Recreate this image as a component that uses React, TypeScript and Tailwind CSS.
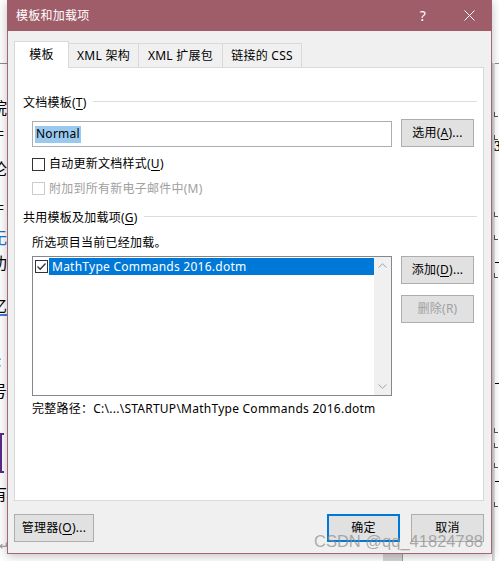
import React from 'react';

const ui = "font-['Noto_Sans','Noto_Sans_CJK_SC',sans-serif]";

// underlined access key letter
const K = ({ children }: { children: React.ReactNode }) => (
  <span className="underline underline-offset-[2px] decoration-1">{children}</span>
);

const WinButton = ({
  children,
  width = 'w-[73px]',
  disabled = false,
  primary = false,
}: {
  children: React.ReactNode;
  width?: string;
  disabled?: boolean;
  primary?: boolean;
}) => (
  <div
    className={`${width} h-[28px] shrink-0 flex items-center justify-center bg-[#e1e1e1] ${
      primary ? 'border-2 border-[#0078d7]' : 'border border-[#adadad]'
    } ${disabled ? 'text-[#a0a0a0]' : 'text-black'}`}
  >
    {children}
  </div>
);

const Check = ({ checked = false, disabled = false }: { checked?: boolean; disabled?: boolean }) => (
  <div
    className={`w-[13px] h-[13px] shrink-0 bg-white border flex items-center justify-center ${
      disabled ? 'border-[#cccccc]' : 'border-[#333333]'
    }`}
  >
    {checked && (
      <svg width="11" height="11" viewBox="0 0 11 11">
        <path d="M1.5 5.5 L4.2 8.2 L9.5 2.5" fill="none" stroke="#333" strokeWidth="1.3" />
      </svg>
    )}
  </div>
);

const GroupHeader = ({ children, mt }: { children: React.ReactNode; mt: string }) => (
  <div className={`${mt} h-[16px] flex items-center pl-[8px] pr-[6px]`}>
    <span className="whitespace-nowrap">{children}</span>
    <div className="flex-1 h-px bg-[#dcdcdc] ml-[6px] mb-[4px]" />
  </div>
);

const tabs = [
  { label: '模板', w: 'w-[55px]' },
  { label: 'XML 架构', w: 'w-[70px]' },
  { label: 'XML 扩展包', w: 'w-[84px]' },
  { label: '链接的 CSS', w: 'w-[79px]' },
];

const rightMarks = [112, 135, 212, 235, 273, 428, 443, 463, 502];

export default function App() {
  return (
    <div className={`relative w-[499px] h-[561px] overflow-hidden bg-white text-[12px] leading-[16px] tracking-[0.25px] text-black ${ui}`}>
      {/* Word document peeking out behind the dialog */}
      <div className="absolute left-0 top-[63px] w-[8px] h-px bg-[#8c8c8c]" />
      <div className="absolute left-[491px] top-[63px] w-[8px] h-px bg-[#8c8c8c]" />
      <div className="absolute left-[492px] top-[63px] w-[3px] h-[498px] bg-gradient-to-r from-[#c8c8c8] to-[#ececec]" />
      {rightMarks.map((y) => (
        <div key={y} className="absolute left-[494px] w-[4px] h-[5px] border-l border-b border-[#555]" style={{ top: y }} />
      ))}
      {[262, 383, 481].map((y) => (
        <div key={y} className="absolute left-[495px] w-[4px] h-px bg-black" style={{ top: y }} />
      ))}
      <div className="absolute left-[494px] top-[138px] text-[15px] leading-[16px] font-bold font-['Liberation_Serif',serif]">3.</div>
      <div className="absolute left-[-9px] text-[16px] leading-[16px] font-['Noto_Sans_CJK_SC',serif]">
        <span className="absolute top-[99px]">院</span>
        <span className="absolute top-[124px] left-[4px]">=</span>
        <span className="absolute top-[160px]">论</span>
        <span className="absolute top-[198px] left-[4px]">=</span>
        <span className="absolute top-[229px] text-[#1f6fd1]">无</span>
        <span className="absolute top-[254px]">功</span>
        <span className="absolute top-[297px]">亿</span>
        <span className="absolute top-[314px] left-[8px] w-[8px] h-[2px] bg-[#3b7ddd]" />
        <span className="absolute top-[352px] left-[6px]">:</span>
        <span className="absolute top-[382px]">号</span>
        <span className="absolute top-[433px] left-[9px] w-[4px] h-[40px] border-l-2 border-y-2 border-[#5a2a8a]" />
        <span className="absolute top-[485px]">有</span>
        <span className="absolute top-[537px] left-[8px] text-[#999] text-[12px]">↵</span>
      </div>
      <div className="absolute left-[383px] top-[553px] w-[20px] h-[8px] bg-[#d6d6d6] border-r border-[#a0a0a0]" />

      {/* dialog window */}
      <div className="absolute left-[7px] top-0 w-[485px] h-[554px] flex flex-col shadow-[0_2px_10px_rgba(0,0,0,0.25)]">
        <div className="h-[31px] shrink-0 bg-[#9f5d69] flex items-center text-white">
          <span className="ml-[9px]">模板和加载项</span>
          <div className="ml-auto flex h-full">
            <div className="w-[46px] flex items-center justify-center text-[14px]">?</div>
            <div className="w-[46px] flex items-center justify-center">
              <svg width="11" height="11" viewBox="0 0 11 11">
                <path d="M0.5 0.5 L10.5 10.5 M10.5 0.5 L0.5 10.5" stroke="white" strokeWidth="1" />
              </svg>
            </div>
          </div>
        </div>

        <div className="flex-1 flex flex-col bg-[#f0f0f0] border-x border-b border-[#a56673] pl-[6px] pr-[7px]">
          {/* tab strip */}
          <div className="mt-[10px] h-[26px] flex items-end relative z-10">
            {tabs.map((t, i) => (
              <div
                key={t.label}
                className={`${t.w} flex items-center justify-center border-t border-r border-[#d9d9d9] ${
                  i === 0 ? 'h-[27px] -mb-px bg-white border-l' : 'h-[24px] bg-[#f0f0f0]'
                }`}
              >
                {t.label}
              </div>
            ))}
          </div>

          {/* tab page */}
          <div className="h-[434px] bg-white border border-[#d9d9d9] flex flex-col">
            <GroupHeader mt="mt-[27px]">
              文档模板(<K>T</K>)
            </GroupHeader>

            <div className="mt-[8px] flex items-end pl-[17px]">
              <div className="w-[360px] h-[26px] border border-[#abadb3] bg-white flex items-center pl-[2px]">
                <span className="bg-[#99c9ef] h-[17px] px-[1px] flex items-center">Normal</span>
              </div>
              <div className="ml-[9px]">
                <WinButton>
                  选用(<K>A</K>)...
                </WinButton>
              </div>
            </div>

            <div className="mt-[5px] h-[24px] flex items-center pl-[17px] gap-[4px]">
              <Check />
              <span>
                自动更新文档样式(<K>U</K>)
              </span>
            </div>
            <div className="h-[25px] flex items-center pl-[17px] gap-[4px] text-[#a0a0a0]">
              <Check disabled />
              <span>附加到所有新电子邮件中(M)</span>
            </div>

            <GroupHeader mt="mt-[9px]">
              共用模板及加载项(<K>G</K>)
            </GroupHeader>

            <div className="mt-[9px] h-[16px] pl-[17px]">所选项目当前已经加载。</div>

            <div className="mt-[5px] flex items-start pl-[17px]">
              <div className="w-[360px] h-[140px] border border-[#828790] bg-white flex">
                <div className="flex-1 pt-[1px] pl-[2px]">
                  <div className="h-[17px] flex items-center gap-[1px]">
                    <Check checked />
                    <div className="flex-1 h-[17px] bg-[#0078d7] text-white pl-[3px] flex items-center">
                      MathType Commands 2016.dotm
                    </div>
                  </div>
                </div>
                <div className="w-[17px] bg-[#f0f0f0] flex flex-col items-center justify-between py-[6px]">
                  <svg width="9" height="5" viewBox="0 0 9 5">
                    <path d="M0.5 4.5 L4.5 0.8 L8.5 4.5" fill="none" stroke="#a3a3a3" strokeWidth="1" />
                  </svg>
                  <svg width="9" height="5" viewBox="0 0 9 5">
                    <path d="M0.5 0.5 L4.5 4.2 L8.5 0.5" fill="none" stroke="#a3a3a3" strokeWidth="1" />
                  </svg>
                </div>
              </div>
              <div className="ml-[9px] flex flex-col gap-[11px]">
                <WinButton>
                  添加(<K>D</K>)...
                </WinButton>
                <WinButton disabled>删除(R)</WinButton>
              </div>
            </div>

            <div className="mt-[5px] h-[16px] pl-[17px] whitespace-nowrap">
              完整路径：C:\...\STARTUP\MathType Commands 2016.dotm
            </div>
          </div>

          {/* bottom buttons */}
          <div className="mt-[13px] flex items-center">
            <WinButton width="w-[80px]">
              管理器(<K>O</K>)...
            </WinButton>
            <div className="ml-auto flex gap-[11px]">
              <WinButton primary>确定</WinButton>
              <WinButton>取消</WinButton>
            </div>
          </div>
        </div>
      </div>

      {/* watermark */}
      <div className="absolute left-[314px] top-[531px] text-[16.5px] leading-[20px] tracking-normal text-[#8a8a8a]/70 font-['Liberation_Sans',sans-serif] whitespace-nowrap">
        CSDN @qq_41824788
      </div>
    </div>
  );
}
